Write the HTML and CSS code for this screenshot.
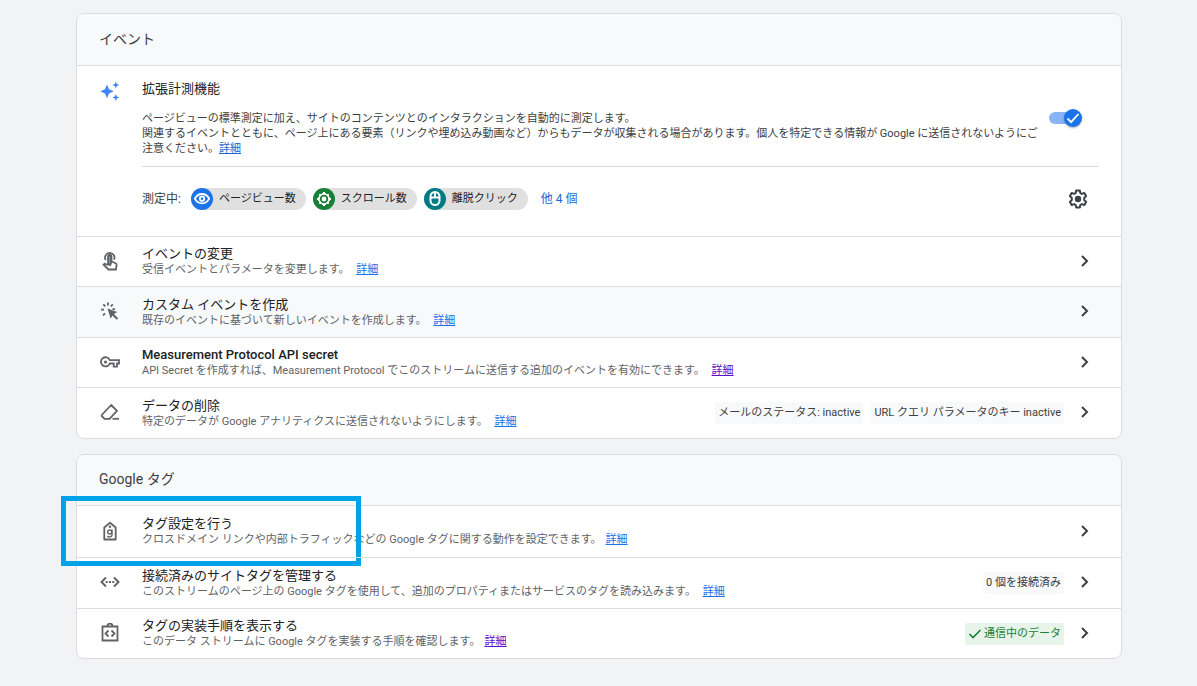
FILE: index.html
```html
<!DOCTYPE html>
<html lang="ja">
<head>
<meta charset="utf-8">
<title>イベント</title>
<link rel="stylesheet" href="styles.css">
</head>
<body>
<main class="page">
  <section class="card">
    <h2 class="card-title">イベント</h2>
    <div class="measure">
      <svg class="spark" viewBox="0 0 20 20" fill="#4285f4"><path d="M7 3.500 9 8.200 13.700 10.300 9 12.400 7 17.200 5 12.400.3 10.300 5 8.200zM15.800.5l1 2.400 2.500 1-2.500 1-1 2.500-1-2.500-2.500-1 2.500-1zM15.800 13.100l1 2.400 2.500 1-2.500 1-1 2.500-1-2.500-2.500-1 2.500-1z"/></svg>
      <div class="measure-body">
        <div class="measure-top">
          <div class="measure-text">
            <h3 class="measure-title">拡張計測機能</h3>
            <p class="measure-desc">ページビューの標準測定に加え、サイトのコンテンツとのインタラクションを自動的に測定します。<br>関連するイベントとともに、ページ上にある要素（リンクや埋め込み動画など）からもデータが収集される場合があります。個人を特定できる情報が Google に送信されないようにご注意ください。<a class="link-main" href="#">詳細</a></p>
          </div>
          <label class="switch"><input type="checkbox" class="switch-input" aria-label="拡張計測機能" checked><span class="track"></span><span class="thumb"><svg width="18" height="18" viewBox="0 0 18 18" fill="none" stroke="#fff" stroke-width="1.800"><path d="m3.500 9.500 3.600 3.600L14.500 5"/></svg></span></label>
        </div>
        <div class="chips">
          <span class="chips-label">測定中:</span>
          <span class="chip"><span class="dot blue"><svg width="22" height="22" viewBox="0 0 22 22" fill="none" stroke="#fff" stroke-width="1.800"><path d="M3.800 10.700C5.500 7.500 8 6 11 6s5.500 1.500 7.200 4.700C16.500 13.900 14 15.400 11 15.400s-5.500-1.500-7.200-4.700z"/><circle cx="11" cy="10.700" r="2.200"/></svg></span>ページビュー数</span>
          <span class="chip"><span class="dot green"><svg width="22" height="22" viewBox="0 0 22 22"><path fill="#fff" stroke="#fff" stroke-linejoin="round" d="m11 4 2.500 2.500h2v2L18 11l-2.500 2.500v2h-2L11 18l-2.500-2.500h-2v-2L4 11l2.500-2.500v-2h2z"/><circle cx="11" cy="11" r="3.300" fill="none" stroke="#188038" stroke-width="1.800"/></svg></span>スクロール数</span>
          <span class="chip"><span class="dot teal"><svg width="22" height="22" viewBox="0 0 22 22" fill="none" stroke="#fff" stroke-width="2"><rect x="6.500" y="4" width="9" height="13" rx="4.500"/><path d="M6 9.500h10M11 4v5"/></svg></span>離脱クリック</span>
          <a class="more" href="#">他 4 個</a>
          <button class="gear" aria-label="設定"><svg width="20" height="20" viewBox="0 0 20 20"><path fill="none" stroke="#3c4043" stroke-width="2" stroke-linejoin="round" d="M8.200 1.500h3.600l.5 2.500 1.500.9 2.500-.9 1.800 3.100-1.900 1.800v2.200l1.900 1.800-1.800 3.100-2.500-.9-1.500.9-.5 2.500H8.200L7.700 16l-1.500-.9-2.500.9-1.800-3.100 1.900-1.800V8.900L1.900 7.100 3.700 4l2.500.9L7.700 4z"/><circle cx="10" cy="10" r="3.200" fill="#3c4043"/></svg></button>
        </div>
      </div>
    </div>
    <div class="row">
      <svg class="icon" viewBox="0 0 20 20" fill="none" stroke="#5f6368" stroke-width="1.800"><path d="M5.700 9a4.700 4.700 0 1 1 8.300-.3"/><path fill="#5f6368" fill-opacity=".55" d="M8.300 13V5.500a1.500 1.500 0 0 1 3 0V11l-1 3z"/><path d="M8.300 14.500V5.500a1.500 1.500 0 0 1 3 0v4.800l4.200 2c.9.400 1.200 1 1.100 1.800l-.7 4.400H8.500L3.600 13.700l1-1 3.700 1.300"/></svg>
      <div class="row-text"><h3 class="row-title">イベントの変更</h3><p class="row-desc">受信イベントとパラメータを変更します。 <a class="link" href="#">詳細</a></p></div>
      <button class="go" aria-label="イベントの変更"><svg width="10" height="14" viewBox="0 0 10 14"><path d="m2 2 5 5-5 5"/></svg></button>
    </div>
    <div class="row row-mid shaded">
      <svg class="icon" viewBox="0 0 20 20"><path fill="none" stroke="#5f6368" stroke-width="1.800" d="M8 1.500v3M3.300 3.300l2 2M1 8.700h3M3 14.300l2-2M12.800 3.300l-2 2M15 8.200h-2.500"/><path fill="#5f6368" d="m7.500 7.500 9.800 3.600-3.400 1.800 4.300 4.300-1.500 1.500-4.300-4.300-1.700 3.300z"/></svg>
      <div class="row-text"><h3 class="row-title">カスタム イベントを作成</h3><p class="row-desc">既存のイベントに基づいて新しいイベントを作成します。 <a class="link" href="#">詳細</a></p></div>
      <button class="go" aria-label="カスタム イベントを作成"><svg width="10" height="14" viewBox="0 0 10 14"><path d="m2 2 5 5-5 5"/></svg></button>
    </div>
    <div class="row">
      <svg class="icon" viewBox="0 0 20 20"><path fill="none" stroke="#5f6368" stroke-width="1.800" d="M9.800 8.200H19v3.300h-2v3.200h-3.300v-3.200H9.800a4.600 4.600 0 1 1 0-3.300z"/><circle cx="5.500" cy="10" r="1.600" fill="#5f6368"/></svg>
      <div class="row-text"><h3 class="row-title row-title-latin">Measurement Protocol API secret</h3><p class="row-desc">API Secret を作成すれば、Measurement Protocol でこのストリームに送信する追加のイベントを有効にできます。 <a class="link deep" href="#">詳細</a></p></div>
      <button class="go" aria-label="Measurement Protocol API secret"><svg width="10" height="14" viewBox="0 0 10 14"><path d="m2 2 5 5-5 5"/></svg></button>
    </div>
    <div class="row row-mid">
      <svg class="icon" viewBox="0 0 20 20" fill="none" stroke="#5f6368" stroke-width="1.800"><path stroke-linejoin="round" d="m1.700 13 9.500-10 5.800 5.800-7.500 8H4.600L1.700 14z"/><path d="M12.500 16.800H19"/></svg>
      <div class="row-text"><h3 class="row-title">データの削除</h3><p class="row-desc">特定のデータが Google アナリティクスに送信されないようにします。 <a class="link" href="#">詳細</a></p></div>
      <span class="badge">メールのステータス: inactive</span><span class="badge">URL クエリ パラメータのキー inactive</span>
      <button class="go" aria-label="データの削除"><svg width="10" height="14" viewBox="0 0 10 14"><path d="m2 2 5 5-5 5"/></svg></button>
    </div>
  </section>

  <section class="card">
    <h2 class="card-title card-title-short">Google タグ</h2>
    <div class="row row-tall">
      <svg class="icon" viewBox="0 0 20 20"><path fill="none" stroke="#5f6368" stroke-width="1.800" stroke-linejoin="round" d="M4.300 18.500V6.500L10 1.800l5.700 4.700v12z"/><circle cx="10" cy="5.800" r="1.200" fill="#5f6368"/><g fill="none" stroke="#5f6368" stroke-width="1.400"><circle cx="9.700" cy="11" r="2"/><path d="M12 8.500v5.500c0 2.200-3.500 2.500-4.500 1"/></g></svg>
      <div class="row-text"><h3 class="row-title">タグ設定を行う</h3><p class="row-desc">クロスドメイン リンクや内部トラフィックなどの Google タグに関する動作を設定できます。<a class="link" href="#">詳細</a></p></div>
      <button class="go" aria-label="タグ設定を行う"><svg width="10" height="14" viewBox="0 0 10 14"><path d="m2 2 5 5-5 5"/></svg></button>
      <div class="highlight"></div>
    </div>
    <div class="row row-mid">
      <svg class="icon" viewBox="0 0 20 20" fill="none" stroke="#5f6368" stroke-width="2"><path d="m6 5.500-4.500 4.500L6 14.500M14 5.500l4.500 4.500-4.500 4.500M5.700 10h2M9 10h2M12.300 10h2"/></svg>
      <div class="row-text"><h3 class="row-title">接続済みのサイトタグを管理する</h3><p class="row-desc">このストリームのページ上の Google タグを使用して、追加のプロパティまたはサービスのタグを読み込みます。 <a class="link" href="#">詳細</a></p></div>
      <span class="badge">0 個を接続済み</span>
      <button class="go" aria-label="接続済みのサイトタグを管理する"><svg width="10" height="14" viewBox="0 0 10 14"><path d="m2 2 5 5-5 5"/></svg></button>
    </div>
    <div class="row">
      <svg class="icon" viewBox="0 0 20 20" fill="none" stroke="#5f6368" stroke-width="1.800"><path d="M2.500 3.500h15v14h-15zM8.500 7.500 5.500 10.500l3 3M11.500 7.500l3 3-3 3"/><path d="M7.500 3a2.500 2.500 0 0 1 5 0"/></svg>
      <div class="row-text"><h3 class="row-title">タグの実装手順を表示する</h3><p class="row-desc">このデータ ストリームに Google タグを実装する手順を確認します。<a class="link deep" href="#">詳細</a></p></div>
      <span class="badge ok"><svg width="14" height="12" viewBox="0 0 14 12" fill="none" stroke="#188038" stroke-width="1.600"><path d="m1.500 6 3.500 3.500L12.500 2"/></svg>通信中のデータ</span>
      <button class="go" aria-label="タグの実装手順を表示する"><svg width="10" height="14" viewBox="0 0 10 14"><path d="m2 2 5 5-5 5"/></svg></button>
    </div>
  </section>
</main>
</body>
</html>
```
FILE: styles.css
```css
* { box-sizing: border-box; }
body {
  margin: 0;
  background: #f1f3f4;
  color: #3c4043;
  font: 400 11px/16px Roboto, "Noto Sans CJK JP", sans-serif;
}
h2, h3, p { margin: 0; }
button { border: 0; padding: 0; background: none; }
svg { display: block; flex: none; }
.page { padding: 13px 75px 27px 76px; display: flex; flex-direction: column; gap: 15px; }
.card { background: #fff; border: 1px solid #dadce0; border-radius: 8px; }
.card-title {
  display: flex; align-items: center;
  height: 51px; padding: 0 22px 2px;
  background: #f8f9fa; border-radius: 7px 7px 0 0;
  font-size: 14px; line-height: 20px; font-weight: 400;
}
.card-title-short { height: 50px; }
.measure { display: flex; border-top: 1px solid #dadce0; padding: 15px 22px 0 23px; min-height: 171px; }
.spark { width: 20px; height: 20px; }
.measure-body { flex: 1; margin-left: 22px; }
.measure-top { display: flex; padding-bottom: 10px; border-bottom: 1px solid #dadce0; }
.measure-text { flex: 1; }
.measure-title { font-size: 13px; line-height: 16px; font-weight: 400; color: #202124; }
.measure-desc { margin-top: 14px; line-height: 15px; }
.link-main { color: #1967d2; }
.switch { position: relative; flex: none; width: 34px; height: 20px; margin: 27px 17px 0 0; }
.switch-input { position: absolute; inset: 0; width: 100%; height: 100%; margin: 0; opacity: 0; }
.track { position: absolute; left: 1px; right: 3px; top: 4px; height: 12px; border-radius: 6px; background: #8ab4f8; }
.thumb {
  position: absolute; right: 0; top: 1px; width: 18px; height: 18px;
  border-radius: 50%; background: #1a73e8; box-shadow: 0 1px 2px #0005;
}
.chips { display: flex; align-items: center; padding: 21px 11px 0 0; gap: 7px; }
.chips-label { margin-right: 3px; font-size: 12px; }
.chip {
  display: flex; align-items: center; gap: 6px;
  height: 22px; padding-right: 10px; border-radius: 11px;
  background: #e0e0e0; color: #202124;
}
.dot { width: 22px; height: 22px; border-radius: 50%; }
.blue { background: #1a73e8; }
.green { background: #188038; }
.teal { background: #007b83; }
.more { margin-left: 6px; color: #1967d2; font-size: 12px; text-decoration: none; }
.gear { margin-left: auto; }
.row {
  position: relative; display: flex; align-items: center;
  min-height: 50px; padding: 0 31px 0 23px;
  border-top: 1px solid #dadce0;
}
.row:last-child { border-radius: 0 0 7px 7px; }
.row-mid { min-height: 51px; }
.row-tall { min-height: 52px; }
.shaded { background: #f8f9fa; }
.icon { width: 20px; height: 20px; margin-bottom: 2px; }
.row-text { flex: 1; margin-left: 22px; }
.row-title { color: #202124; font-size: 13px; line-height: 16px; font-weight: 400; }
.row-title-latin { font-weight: 500; }
.row-desc { color: #5f6368; line-height: 15px; }
.link { margin-left: 4px; color: #1a73e8; text-decoration: underline; }
.deep { color: #5b10c9; }
.badge {
  display: flex; align-items: center; gap: 2px;
  height: 22px; margin-left: 8px; padding: 0 3px;
  background: #f8f9fa; border-radius: 2px; color: #3c4043;
}
.ok { background: #e6f4ea; color: #188038; }
.go { margin: 0 0 2px 16px; }
.go path { fill: none; stroke: #3c4043; stroke-width: 2; }
.highlight {
  position: absolute; left: -16px; top: -10px; width: 300px; height: 70px;
  border: 5px solid #00a2e8; pointer-events: none;
}
```
